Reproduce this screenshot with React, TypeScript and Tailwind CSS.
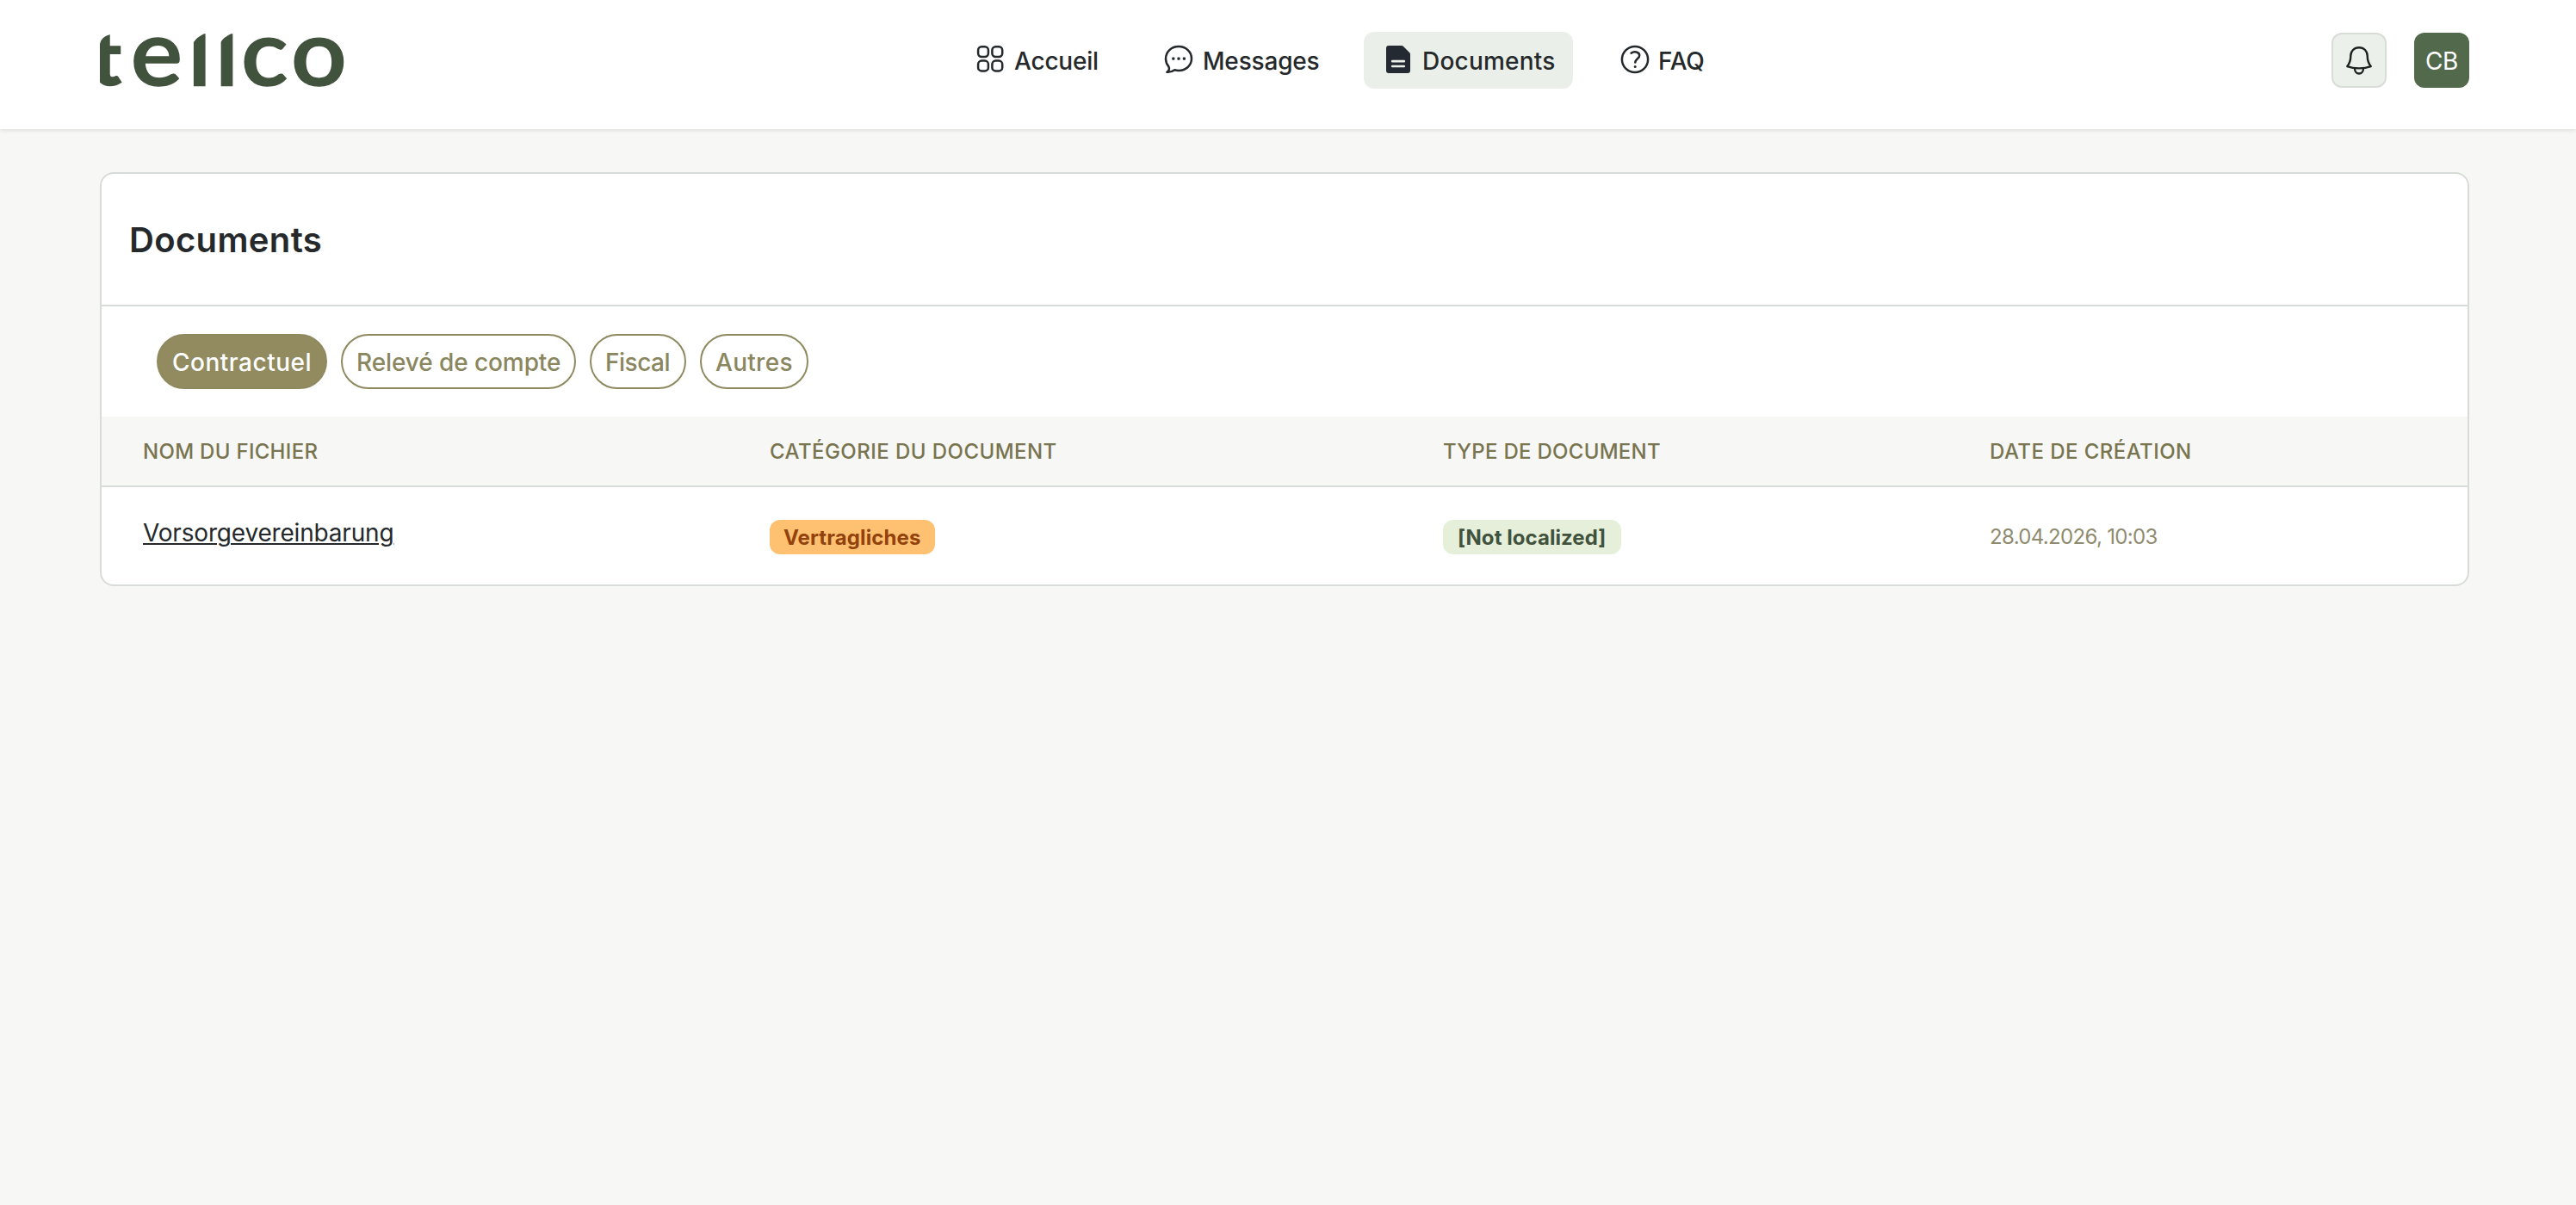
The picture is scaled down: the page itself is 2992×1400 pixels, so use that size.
import type { ReactNode } from 'react';

function Logo() {
  return (
    <svg width="302" height="72" viewBox="0 0 302 72" className="block overflow-visible" role="img" aria-label="tellco">
      <text
        transform="scale(1.07 1)"
        x="-4.2 39 101 130.5 158.800 213"
        y="64.500"
        className="fill-[#41523d] stroke-[#41523d] stroke-[1.4px] font-[Lato] text-[106px] font-semibold"
      >
        <tspan className="text-[88px] font-black">t</tspan>ellco
      </text>
      {/* slanted tops of the t and both l stems */}
      <path
        d="M-6 -28V70H6V17Q7 9 18 6H110L115 15Q118 9.500 127 5.200H142L146.300 15Q149.300 9.500 158.300 5.200H170V-28Z"
        fill="#fff"
      />
    </svg>
  );
}

const icon = {
  fill: 'none',
  stroke: 'currentColor',
  strokeWidth: 2.5,
  strokeLinecap: 'round' as const,
  strokeLinejoin: 'round' as const,
};

function GridIcon() {
  return (
    <svg width="36" height="36" viewBox="0 0 36 36" {...icon}>
      <rect x="4.1" y="2.3" width="11.8" height="11.8" rx="4" />
      <rect x="20.4" y="2.3" width="11.8" height="11.8" rx="4" />
      <rect x="4.1" y="18.600" width="11.8" height="11.8" rx="4" />
      <rect x="20.4" y="18.600" width="11.8" height="11.8" rx="4" />
    </svg>
  );
}

function MessageIcon() {
  return (
    <svg width="36" height="36" viewBox="0 0 36 36" {...icon}>
      <path d="M5.4 31.7c2.6-1.8 3-4.3 2-6.3A14.4 14.4 0 0 1 4 16.5C4 8.200 10.600 2.100 19 2.100S34 8.200 34 16.100 27.500 29.900 19 29.900c-1.700 0-3.200-.2-4.600-.6-2.500 1.800-5.600 2.600-9 2.400Z" />
      <g fill="currentColor" stroke="none">
        <rect x="11.200" y="14.600" width="3.200" height="3.200" rx="1" />
        <rect x="17.400" y="14.600" width="3.200" height="3.200" rx="1" />
        <rect x="23.800" y="14.600" width="3.200" height="3.200" rx="1" />
      </g>
    </svg>
  );
}

function DocumentIcon() {
  return (
    <svg width="36" height="36" viewBox="0 0 36 36">
      <path d="M7 1h15.200c.6 0 1.200.3 1.600.7l7.500 7.500c.5.5.7 1 .7 1.700V30a3 3 0 0 1-3 3H7a3 3 0 0 1-3-3V4a3 3 0 0 1 3-3Z" fill="#232a32" />
      <path d="M11.200 19.200h13.600M11.200 25h13.600" stroke="#edf1eb" strokeWidth="2.700" strokeLinecap="round" />
    </svg>
  );
}

function HelpIcon() {
  return (
    <svg width="36" height="36" viewBox="0 0 36 36" {...icon}>
      <circle cx="19" cy="17" r="15.100" />
      <path d="M14.600 9.800c3-2.600 9.600-1.900 9.600 2.600 0 3.900-4.700 3.700-4.900 8.100" />
      <circle cx="19.200" cy="25.600" r="1.500" fill="currentColor" stroke="none" />
    </svg>
  );
}

function BellIcon() {
  return (
    <svg width="36" height="36" viewBox="0 0 36 36" {...icon} strokeWidth={2.4}>
      <path d="M18 3.200c-5.700 0-9.700 4.300-9.700 9.600 0 5.400-1.300 9.100-4 12.300C8.600 26.700 13.100 27.400 18 27.400s9.400-.7 13.700-2.300c-2.700-3.200-4-6.900-4-12.300 0-5.300-4-9.600-9.700-9.600Z" />
      <path d="M13 27.400c0 3.500 2 6.100 5 6.100s5-2.600 5-6.100" />
    </svg>
  );
}

function NavItem({ children, label, className }: { children: ReactNode; label: string; className: string }) {
  return (
    <a className={`flex h-[66px] items-center rounded-xl pl-[22px] ${className}`}>
      {children}
      <span className="pt-0.5">{label}</span>
    </a>
  );
}

const chip = 'flex h-16 items-center rounded-full border-2 border-[#8f895f] pt-px whitespace-nowrap';
const cell = 'pl-12 whitespace-nowrap';
const columns = 'grid grid-cols-[728px_782px_635px_1fr]';

export default function App() {
  return (
    <div className="min-h-[1400px] bg-[#f7f7f5] font-[Inter,sans-serif] text-[28px] leading-[34px] text-[#25292b]">
      <header className="relative flex h-[150px] items-start justify-between bg-white pr-[124px] pl-[110px] shadow-[0_2px_4px_rgba(0,0,0,0.09)]">
        <div className="w-[1000px] pt-[34px]">
          <Logo />
        </div>
        <nav className="flex flex-1 pt-[37px] font-medium">
          <NavItem label="Accueil" className="mr-[26px] w-[192px] gap-[10px] tracking-[-0.2px]">
            <GridIcon />
          </NavItem>
          <NavItem label="Messages" className="mr-[26px] w-[230px] gap-[11px] tracking-[-0.18px]">
            <MessageIcon />
          </NavItem>
          <NavItem label="Documents" className="mr-[31px] w-[243px] gap-[10px] bg-[#ebefe9] tracking-[0.2px]">
            <DocumentIcon />
          </NavItem>
          <NavItem label="FAQ" className="w-[150px] gap-[10px] tracking-[-0.3px]">
            <HelpIcon />
          </NavItem>
        </nav>
        <div className="flex gap-8 pt-[38px]">
          <button className="flex size-16 items-center justify-center rounded-xl border-2 border-[#d9ddd8] bg-[#ecf0eb] text-[#1d2221]">
            <BellIcon />
          </button>
          <button className="flex size-16 items-center justify-center rounded-xl bg-[#52694c] pt-px tracking-[-0.45px] text-white">
            CB
          </button>
        </div>
      </header>

      <main className="pt-[50px] pr-[124px] pl-[116px]">
        <section className="overflow-hidden rounded-2xl border-2 border-[#d8dcd8] bg-white">
          <div className="flex h-[154px] items-center border-b-2 border-[#d8dcd8] pt-0.5 pl-8">
            <h1 className="text-[40px] leading-[48px] font-semibold tracking-[0.35px]">Documents</h1>
          </div>
          <div className="flex h-32 items-center gap-4 pl-16 font-medium text-[#8a865f]">
            <button className={`${chip} w-[198px] bg-[#928b60] pl-4 tracking-[0.51px] text-white`}>Contractuel</button>
            <button className={`${chip} w-[273px] pl-4 tracking-[-0.09px]`}>Relevé de compte</button>
            <button className={`${chip} w-[112px] pl-4 tracking-[-0.49px]`}>Fiscal</button>
            <button className={`${chip} w-[126px] pl-4 tracking-[0.3px]`}>Autres</button>
          </div>
          <div className={`${columns} h-[82px] items-center border-b-2 border-[#d8dcd8] bg-[#f7f7f5] pt-0.5 text-2xl font-medium text-[#78744f]`}>
            <div className={`${cell} tracking-[0.3px]`}>NOM DU FICHIER</div>
            <div className={`${cell} tracking-[0.45px]`}>CATÉGORIE DU DOCUMENT</div>
            <div className={`${cell} tracking-[0.28px]`}>TYPE DE DOCUMENT</div>
            <div className={`${cell} tracking-[0.45px]`}>DATE DE CRÉATION</div>
          </div>
          <div className={`${columns} h-[113px] items-start`}>
            <div className={`${cell} pt-9`}>
              <a className="tracking-[-0.18px] underline decoration-2 underline-offset-2">Vorsorgevereinbarung</a>
            </div>
            <div className={`${cell} flex pt-[38px]`}>
              <span className="flex h-10 w-48 items-center rounded-xl bg-[#fec171] pt-0.5 pl-4 text-2xl font-bold tracking-[0.1px] text-[#93420e]">
                Vertragliches
              </span>
            </div>
            <div className={`${cell} flex pt-[38px]`}>
              <span className="flex h-10 w-[207px] items-center rounded-xl bg-[#e6efd9] pt-0.5 pl-[17px] text-2xl font-bold tracking-[0.05px] text-[#41523d]">
                [Not localized]
              </span>
            </div>
            <div className={`${cell} pt-[42px] text-2xl tracking-[-0.66px] text-[#8f8b70]`}>28.04.2026, 10:03</div>
          </div>
        </section>
      </main>
    </div>
  );
}
